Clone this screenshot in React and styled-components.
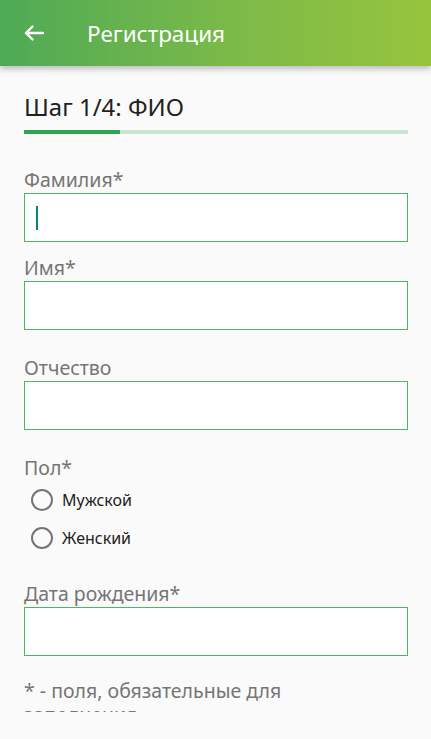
import React from 'react'
import styled, { createGlobalStyle } from 'styled-components'

const GlobalStyle = createGlobalStyle`
    html, body {
        margin: 0;
        padding: 0;
        background: #fafafa;
    }
    * {
        box-sizing: border-box;
    }
`

const Screen = styled.div`
    width: 431px;
    height: 739px;
    display: flex;
    flex-direction: column;
    background: #fafafa;
    font-family: "Noto Sans", "Open Sans", sans-serif;
    overflow: hidden;
`

const Toolbar = styled.header`
    height: 66px;
    flex-shrink: 0;
    display: flex;
    align-items: center;
    padding-left: 24px;
    gap: 43px;
    background: linear-gradient(90deg, #4eaa56 0%, #7cba48 55%, #97c43d 100%);
    box-shadow: 0 3px 6px rgba(0, 0, 0, 0.25);
    position: relative;
    z-index: 1;
    color: #fff;

    & h1 {
        margin: 0;
        font-size: 22.5px;
        font-weight: 400;
    }
`

const BackButton = styled.button`
    border: 0;
    padding: 0;
    background: none;
    width: 20px;
    height: 20px;
    display: flex;
    align-items: center;
    justify-content: center;
`

const Scroll = styled.main`
    height: 646px;
    flex-shrink: 0;
    overflow: hidden;
    padding: 25px 23px 0 24px;
`

const StepTitle = styled.h2`
    margin: 0;
    font-size: 24px;
    line-height: 32px;
    font-weight: 400;
    color: #212121;
`

const Progress = styled.div`
    margin-top: 7px;
    height: 4px;
    background: #c8e6cf;
    & div {
        height: 100%;
        background: #2ea44f;
    }
`

const Field = styled.div`
    margin-top: ${p => p.$top}px;
`

const Label = styled.div`
    font-size: 19.5px;
    line-height: 24px;
    color: #757575;
    margin-bottom: 1px;
`

const Input = styled.div`
    height: 49px;
    background: #fff;
    border: 1px solid #4cb763;
    display: flex;
    align-items: center;
    padding-left: 11px;
`

const Caret = styled.span`
    width: 2px;
    height: 24px;
    background: #00897b;
`

const RadioRow = styled.label`
    height: 38px;
    display: flex;
    align-items: center;
    gap: 9px;
    padding-left: 7px;
    font-size: 16px;
    color: #212121;
`

const RadioCircle = styled.span`
    width: 22px;
    height: 22px;
    border-radius: 50%;
    border: 2px solid #757575;
    flex-shrink: 0;
`

const Footnote = styled.p`
    margin: 23px 0 0;
    padding-right: 60px;
    font-size: 19.5px;
    line-height: 24px;
    color: #757575;
`

const TextField = ({ label, top, focused }) => (
    <Field $top={top}>
        <Label>{label}</Label>
        <Input>{focused && <Caret />}</Input>
    </Field>
)

const App = () => {
    const step = 1
    const total = 4

    return (
        <Screen>
            <GlobalStyle />
            <Toolbar>
                <BackButton aria-label="back">
                    <svg width="20" height="16" viewBox="0 0 20 16" fill="none">
                        <path d="M19 8H2.5M8.5 1.5L2 8l6.5 6.5" stroke="#fff" strokeWidth="2.4" strokeLinecap="round" strokeLinejoin="round" />
                    </svg>
                </BackButton>
                <h1>Регистрация</h1>
            </Toolbar>
            <Scroll>
                <StepTitle>Шаг 1/4: ФИО</StepTitle>
                <Progress>
                    <div style={{ width: `${(step / total) * 100}%` }} />
                </Progress>
                <TextField label="Фамилия*" top={34} focused />
                <TextField label="Имя*" top={14} />
                <TextField label="Отчество" top={26} />
                <Field $top={26}>
                    <Label>Пол*</Label>
                    <RadioRow><RadioCircle />Мужской</RadioRow>
                    <RadioRow><RadioCircle />Женский</RadioRow>
                </Field>
                <TextField label="Дата рождения*" top={25} />
                <Footnote>* - поля, обязательные для заполнения</Footnote>
            </Scroll>
        </Screen>
    )
}

export default App
